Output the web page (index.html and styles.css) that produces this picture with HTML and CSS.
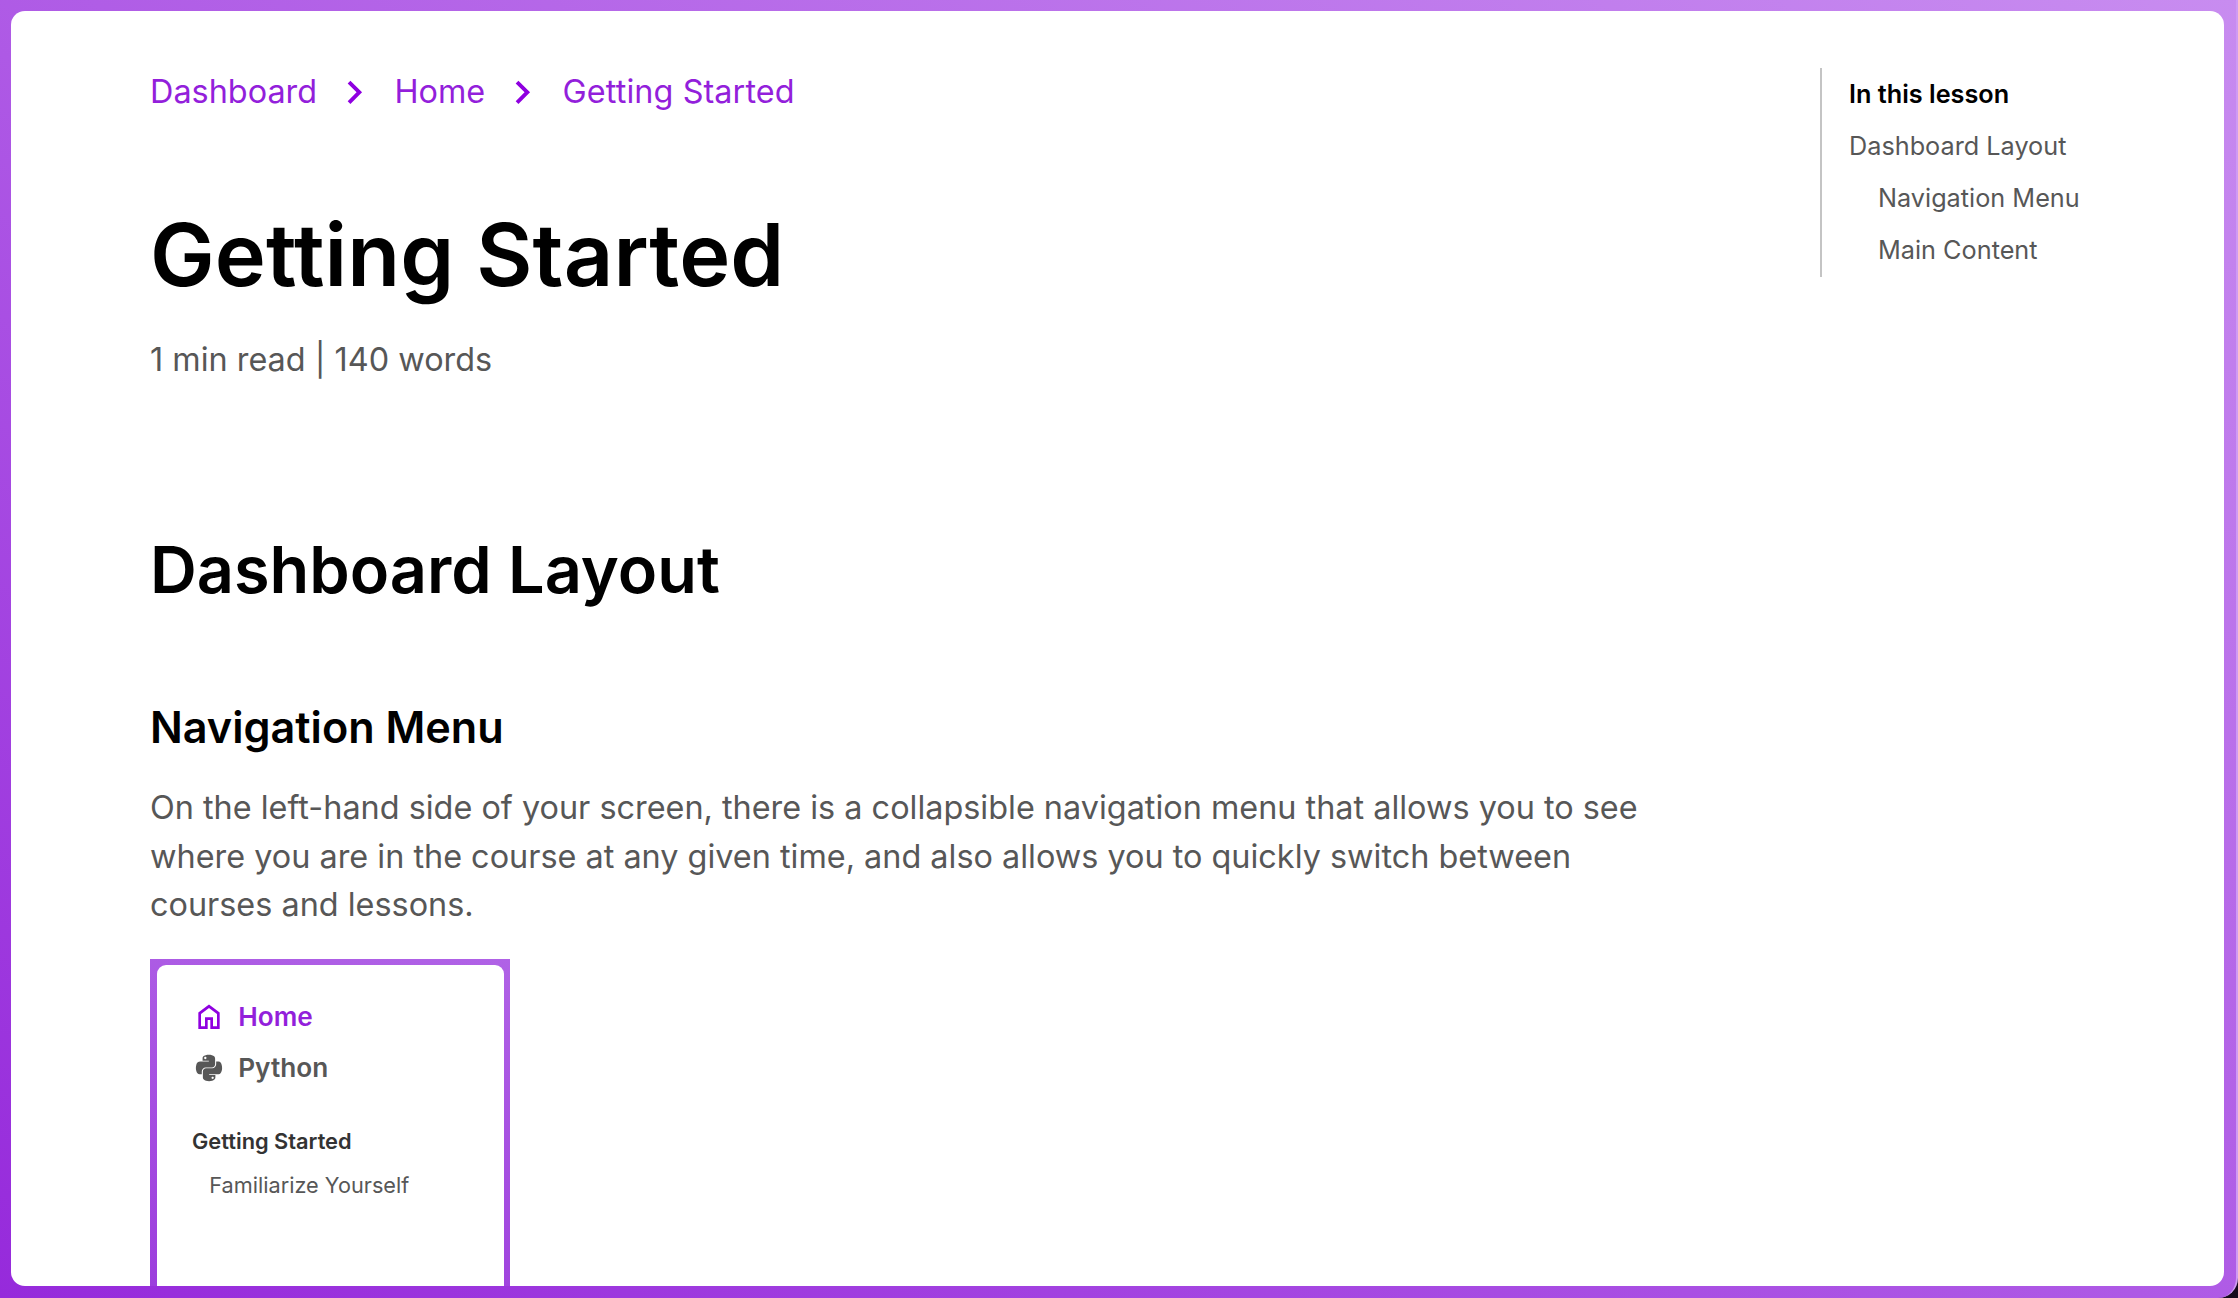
FILE: index.html
```html
<!DOCTYPE html>
<html lang="en">
<head>
<meta charset="utf-8">
<title>Getting Started</title>
<link rel="stylesheet" href="styles.css">
</head>
<body>
<div class="window">
  <div class="panel">
    <main class="lesson">
      <nav class="breadcrumbs">
        <a>Dashboard</a>
        <svg class="chevron" viewBox="0 0 24 24"><path d="M10 6 8.59 7.41 13.17 12l-4.58 4.59L10 18l6-6z"/></svg>
        <a>Home</a>
        <svg class="chevron" viewBox="0 0 24 24"><path d="M10 6 8.59 7.41 13.17 12l-4.58 4.59L10 18l6-6z"/></svg>
        <a class="current">Getting Started</a>
      </nav>
      <h1>Getting Started</h1>
      <p class="meta">1 min read | 140 words</p>
      <h2>Dashboard Layout</h2>
      <h3>Navigation Menu</h3>
      <p class="body-text">On the left-hand side of your screen, there is a collapsible navigation menu that allows you to see where you are in the course at any given time, and also allows you to quickly switch between courses and lessons.</p>
      <div class="preview">
        <div class="preview-panel">
          <div class="course active">
            <svg class="course-icon" viewBox="0 0 24 24"><path d="M12 5.2 18 9.7V19h-3v-6.8H9V19H6V9.7zM12 2.6 4 8.6V21h7v-6.8h2V21h7V8.6z" fill-rule="evenodd"/></svg>
            <span>Home</span>
          </div>
          <div class="course">
            <svg class="course-icon python" viewBox="0 0 448 512"><path d="M439.8 200.5c-7.7-30.9-22.3-54.2-53.4-54.2h-40.1v47.4c0 36.8-31.2 67.8-66.8 67.8H172.7c-29.2 0-53.4 25-53.4 54.3v101.8c0 29 25.2 46 53.4 54.3 33.8 9.9 66.3 11.7 106.8 0 26.9-7.8 53.4-23.5 53.4-54.3v-40.7H226.2v-13.6h160.2c31.1 0 42.6-21.7 53.4-54.2 11.2-33.5 10.7-65.7 0-108.6zM286.2 404c11.1 0 20.1 9.1 20.1 20.3 0 11.3-9 20.4-20.1 20.4-11 0-20.1-9.2-20.1-20.4.1-11.3 9.1-20.3 20.1-20.3zM167.8 248.1h106.8c29.7 0 53.4-24.5 53.4-54.3V91.9c0-29-24.4-50.7-53.4-55.6-35.8-5.9-74.7-5.6-106.8.1-45.2 8-53.4 24.7-53.4 55.6v40.7h106.9v13.6h-147c-31.1 0-58.3 18.7-66.8 54.2-9.8 40.7-10.2 66.1 0 108.6 7.6 31.6 25.7 54.2 56.8 54.2H101v-48.8c0-35.3 30.5-66.4 66.8-66.4zm-6.7-142.6c-11.1 0-20.1-9.1-20.1-20.3.1-11.3 9-20.4 20.1-20.4 11 0 20.1 9.2 20.1 20.4s-9 20.3-20.1 20.3z"/></svg>
            <span>Python</span>
          </div>
          <div class="section">Getting Started</div>
          <div class="section-item">Familiarize Yourself</div>
        </div>
      </div>
    </main>
    <aside class="toc">
      <div class="toc-title">In this lesson</div>
      <a>Dashboard Layout</a>
      <a class="nested">Navigation Menu</a>
      <a class="nested">Main Content</a>
    </aside>
  </div>
</div>
</body>
</html>
```
FILE: styles.css
```css
* { box-sizing: border-box; margin: 0; }

body {
  height: 1298px;
  overflow: hidden;
  background: #160a1c;
  font: 400 32.4px/48.6px Inter, sans-serif;
  color: #575757;
}

.window {
  height: 1298px;
  padding: 11px 12px 12px 11px;
  border-right: 2px solid #cf9af2;
  border-bottom-right-radius: 20px;
  background: linear-gradient(to top right, #962adb, #c88cf0);
}

.panel {
  display: flex;
  justify-content: space-between;
  height: 1275px;
  padding: 57px 0 0 139px;
  overflow: hidden;
  border-radius: 14px;
  background: #fff;
}

.lesson { width: 1500px; }

.breadcrumbs {
  display: flex;
  align-items: center;
  height: 48px;
  color: #931fdb;
}

.current { letter-spacing: 0.08px; }

.chevron {
  width: 46.6px;
  height: 46.6px;
  margin: 1px 16.8px 0 14px;
  fill: #8f00e0;
}

h1, h2, h3 {
  font-weight: 600;
  line-height: 1.2;
  color: #000;
}

h1 { margin-top: 86.7px; font-size: 86.4px; letter-spacing: 0.12px; }
h2 { margin-top: 146.6px; font-size: 64.8px; }
h3 { margin-top: 93px; font-size: 43.2px; }

.meta { margin-top: 29.6px; }
.body-text { margin-top: 30.2px; }

.preview {
  width: 360px;
  height: 700px;
  margin-top: 28.8px;
  padding: 6px 6px 0 7px;
  background: linear-gradient(12deg, #8a1cd4, #b062e6);
}

.preview-panel {
  height: 690px;
  padding: 27px 35px;
  border-radius: 9px;
  background: #fff;
}

.course {
  display: flex;
  align-items: center;
  gap: 13.2px;
  height: 51px;
  padding-left: 1px;
  font-size: 26.2px;
  font-weight: 600;
}

.active { color: #931fdb; }

.course-icon {
  width: 32px;
  height: 32px;
  fill: #575757;
}

.active .course-icon { fill: #8f00e0; }

.python { height: 30px; }

.section {
  margin-top: 26px;
  font-size: 21.8px;
  font-weight: 600;
  line-height: 43px;
  color: #333;
}

.section-item {
  padding-left: 17.3px;
  font-size: 21.7px;
  line-height: 44px;
}

.toc {
  display: flex;
  flex-direction: column;
  width: 404px;
  height: 209px;
  padding-left: 27px;
  border-left: 2px solid #c4c4c4;
  font-size: 25.25px;
  line-height: 52px;
}

.toc-title { font-weight: 600; color: #000; }
.nested { padding-left: 29px; }
```
